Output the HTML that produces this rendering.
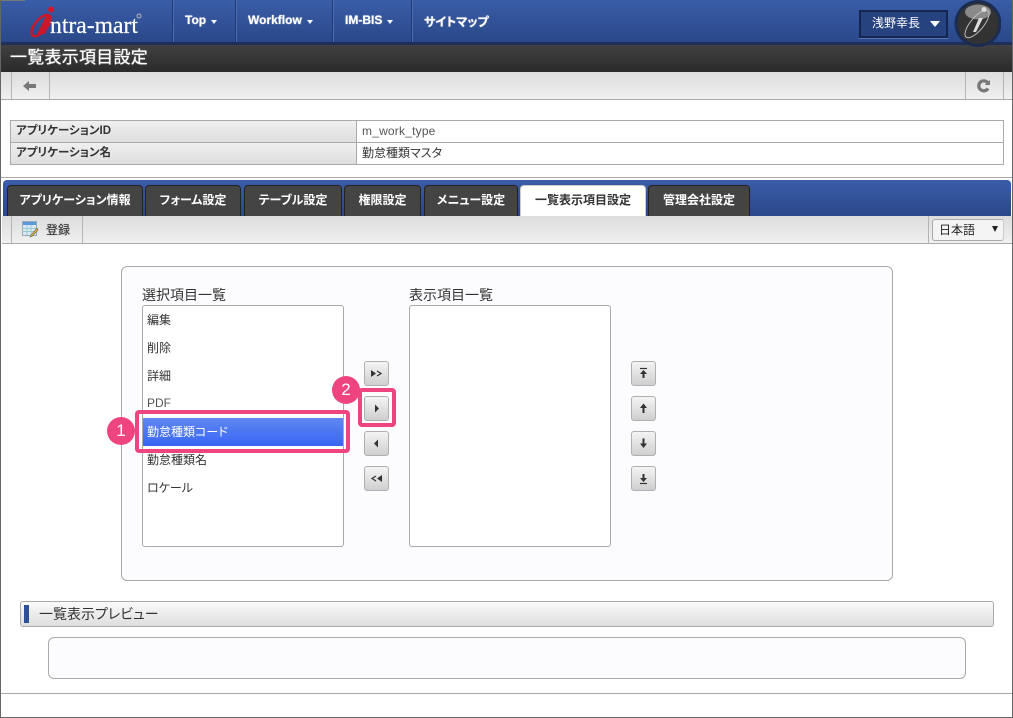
<!DOCTYPE html>
<html lang="ja"><head><meta charset="utf-8"><title>一覧表示項目設定</title>
<style>
html,body{margin:0;padding:0;background:#fff}
body{width:1013px;height:718px;position:relative;overflow:hidden;font-family:"Liberation Sans","Noto Sans CJK JP",sans-serif;font-size:12px;color:#333;font-feature-settings:"palt"}
.a{position:absolute;box-sizing:border-box}
.t{position:absolute;white-space:nowrap;line-height:16px}
.sep{position:absolute;width:1px;background:#b4b4b4}
.nav{position:absolute;top:0;height:42px;line-height:41px;color:#fff;font-weight:bold;font-size:12px;text-shadow:0 0 1px #fff;white-space:nowrap}
.nsep{position:absolute;top:0;height:42px;width:1px;background:#1f3a78;box-shadow:1px 0 0 #4a6cb0}
.caret{display:inline-block;width:0;height:0;border:3.500px solid transparent;border-top:4px solid #fff;border-bottom:0;margin-left:5px;vertical-align:0}
.tab{position:absolute;top:185px;height:31px;background:#444;border:1px solid #222;border-bottom:0;border-radius:4px 4px 0 0;color:#fff;font-weight:bold;text-align:center;line-height:28px;font-size:12px;box-sizing:border-box;white-space:nowrap}
.tab.on{background:#fff;color:#333;border-color:#ccc;font-weight:bold}
.list{position:absolute;top:305px;width:202px;height:242px;background:#fff;border:1px solid #aaa;border-radius:3px;box-sizing:border-box}
.it{position:absolute;left:147px;white-space:nowrap;font-size:12px;line-height:16px;color:#333}
.btn{position:absolute;width:25px;height:25px;box-sizing:border-box;border:1px solid #b0b0b0;border-radius:3px;background:linear-gradient(#f4f4f4,#cfcfcf)}
.btn svg{position:absolute;left:0;top:0}
.badge{position:absolute;width:28px;height:28px;border-radius:50%;background:#ee4581;color:#fff;text-align:center;line-height:28px;font-size:17px}
.pk{position:absolute;box-sizing:border-box;border:4px solid #ee4581;border-radius:4px}
</style></head><body>

<!-- header -->
<div class="a" style="left:0;top:0;width:1013px;height:42px;background:linear-gradient(#3a5da8,#2a4889)"></div>
<div class="a" style="left:0;top:42px;width:1013px;height:3px;background:#1f2f57"></div>
<div class="a" style="left:0;top:45px;width:1013px;height:27px;background:linear-gradient(#414141,#2a2a2a)"></div>
<div class="a" style="left:0;top:72px;width:1013px;height:27px;background:linear-gradient(#dcdcdc,#f0f0f0)"></div>
<div class="a" style="left:0;top:99px;width:1013px;height:1px;background:#aaa"></div>
<div class="a" style="left:0;top:0;width:25px;height:1px;background:#777"></div>

<!-- logo -->
<svg class="a" style="left:28px;top:4px" width="120" height="36" viewBox="0 0 120 36">
<ellipse cx="13" cy="21.500" rx="6" ry="13" transform="rotate(40 13 21.500)" fill="none" stroke="#c8182a" stroke-width="2.400"/>
<path d="M18 12 L24 12 L17 30 L9 30Z" fill="#c8182a"/>
<circle cx="23" cy="5.500" r="3" fill="#d4162a"/>
<text x="22" y="29" font-family="'Liberation Serif',serif" font-size="24" fill="#fff" stroke="#fff" stroke-width=".2" textLength="88" lengthAdjust="spacingAndGlyphs">ntra-mart</text>
<circle cx="111" cy="12" r="2" fill="none" stroke="#bbb" stroke-width="1"/>
</svg>

<div class="nsep" style="left:172px"></div>
<div class="nsep" style="left:235px"></div>
<div class="nsep" style="left:332px"></div>
<div class="nsep" style="left:411px"></div>
<div class="nav" style="left:185px">Top<span class="caret"></span></div>
<div class="nav" style="left:248px">Workflow<span class="caret"></span></div>
<div class="nav" style="left:345px">IM-BIS<span class="caret"></span></div>
<div class="nav" style="left:424px;top:2px;font-size:12px">サイトマップ</div>

<div class="a" style="left:859px;top:10px;width:89px;height:28px;background:#27437f;border:2px solid #142650;box-shadow:0 1px 0 #5575b5"></div>
<div class="t" style="left:872px;top:15px;color:#fff;font-size:12px">浅野幸長</div>
<div class="a" style="left:930px;top:21px;width:0;height:0;border:5px solid transparent;border-top:6px solid #fff;border-bottom:0"></div>

<svg class="a" style="left:953px;top:0" width="48" height="47" viewBox="0 0 48 47">
<circle cx="25" cy="23.500" r="23.500" fill="#1c2c50"/>
<circle cx="25" cy="23.500" r="20.500" fill="#333"/>
<ellipse cx="25" cy="12" rx="13" ry="7.500" fill="#8a8a8a"/>
<ellipse cx="24" cy="24" rx="6.500" ry="17" transform="rotate(40 24 24)" fill="none" stroke="#bbb" stroke-width="1"/>
<path d="M26 18 L20 32 L23 32 L30 18Z" fill="#ddd"/>
<circle cx="31" cy="9.500" r="2.500" fill="#ddd"/>
</svg>

<div class="t" style="left:10px;top:48px;color:#fff;font-size:17px;line-height:20px;letter-spacing:.25px;text-shadow:0 0 1px #fff;font-feature-settings:normal">一覧表示項目設定</div>

<!-- top toolbar -->
<div class="sep" style="left:11px;top:72px;height:27px"></div>
<div class="sep" style="left:49px;top:72px;height:27px"></div>
<div class="sep" style="left:965px;top:72px;height:27px"></div>
<div class="sep" style="left:1003px;top:72px;height:27px"></div>
<svg class="a" style="left:23px;top:80px" width="14" height="12" viewBox="0 0 14 12"><path d="M0 6 L6 1 V4 H13 V8 H6 V11Z" fill="#777"/></svg>
<svg class="a" style="left:977px;top:79px" width="14" height="14" viewBox="0 0 14 14"><path d="M11 9.500 A5 5 0 1 1 10.500 3.500" fill="none" stroke="#777" stroke-width="3.200"/><path d="M7.500 6 H13 V1Z" fill="#777"/></svg>

<!-- info table -->
<div class="a" style="left:10px;top:120px;width:994px;height:45px;border:1px solid #aaa;background:#fff"></div>
<div class="a" style="left:11px;top:121px;width:345px;height:43px;background:linear-gradient(#f0f0f0,#dedede 50%,#f0f0f0 50%,#dedede)"></div>
<div class="a" style="left:356px;top:120px;width:1px;height:45px;background:#aaa"></div>
<div class="a" style="left:10px;top:142px;width:994px;height:1px;background:#aaa"></div>
<div class="t" style="left:16px;top:123px;font-weight:bold;color:#333;font-size:11.500px">アプリケーションID</div>
<div class="t" style="left:16px;top:145px;font-weight:bold;color:#333;font-size:11.500px">アプリケーション名</div>
<div class="t" style="left:362px;top:123px;color:#555;letter-spacing:.2px">m_work_type</div>
<div class="t" style="left:362px;top:145px;color:#333">勤怠種類マスタ</div>

<!-- tabs -->
<div class="a" style="left:0;top:177px;width:1013px;height:1px;background:#aaa"></div>
<div class="a" style="left:3px;top:180px;width:1008px;height:36px;background:linear-gradient(#3a5da8,#2a4889);border-radius:4px 4px 0 0"></div>
<div class="tab" style="left:7px;width:136px">アプリケーション情報</div>
<div class="tab" style="left:145px;width:96px">フォーム設定</div>
<div class="tab" style="left:244px;width:98px">テーブル設定</div>
<div class="tab" style="left:344px;width:77px">権限設定</div>
<div class="tab" style="left:424px;width:94px">メニュー設定</div>
<div class="tab on" style="left:520px;width:126px">一覧表示項目設定</div>
<div class="tab" style="left:648px;width:102px">管理会社設定</div>

<!-- toolbar 2 -->
<div class="a" style="left:2px;top:216px;width:1010px;height:27px;background:linear-gradient(#dcdcdc,#f0f0f0)"></div>
<div class="a" style="left:2px;top:243px;width:1010px;height:1px;background:#aaa"></div>
<div class="sep" style="left:11px;top:216px;height:27px"></div>
<div class="sep" style="left:82px;top:216px;height:27px"></div>
<div class="sep" style="left:928px;top:216px;height:27px"></div>
<svg class="a" style="left:22px;top:221px" width="17" height="17" viewBox="0 0 17 17">
<rect x=".5" y=".5" width="14" height="14" fill="#dbe8f6" stroke="#9ab"/>
<rect x="1" y="1" width="13" height="3" fill="#5a9ad8"/>
<path d="M1 7.500H14M1 10.500H14M5 4V14M9 4V14" stroke="#9cc" stroke-width="1"/>
<path d="M15 7 L9 14 L8 16 L10 15.500 L16 9Z" fill="#e8b030" stroke="#665" stroke-width=".6"/>
</svg>
<div class="t" style="left:46px;top:222px;color:#333;text-shadow:0 0 1px #888">登録</div>
<div class="a" style="left:932px;top:219px;width:72px;height:22px;border:1px solid #aaa;border-right-color:#ccc;border-radius:3px;background:#f4f4f4"></div>
<div class="t" style="left:939px;top:222px;color:#222">日本語</div>
<div class="a" style="left:992px;top:226px;width:0;height:0;border:3.500px solid transparent;border-top:6px solid #222;border-bottom:0"></div>

<!-- main panel -->
<div class="a" style="left:121px;top:266px;width:772px;height:315px;background:#fcfcff;border:1px solid #aaa;border-radius:6px"></div>
<div class="t" style="left:142px;top:287px;font-size:14px;color:#333">選択項目一覧</div>
<div class="t" style="left:409px;top:287px;font-size:14px;color:#333">表示項目一覧</div>
<div class="list" style="left:142px"></div>
<div class="list" style="left:409px"></div>
<div class="a" style="left:143px;top:418px;width:200px;height:28px;background:linear-gradient(#6087f2,#3766f3)"></div>
<div class="it" style="top:312px">編集</div>
<div class="it" style="top:340px">削除</div>
<div class="it" style="top:368px">詳細</div>
<div class="it" style="top:395px;color:#555">PDF</div>
<div class="it" style="top:424px;color:#fff">勤怠種類コード</div>
<div class="it" style="top:452px">勤怠種類名</div>
<div class="it" style="top:480px">ロケール</div>

<!-- move buttons -->
<div class="btn" style="left:364px;top:361px"><svg width="23" height="23" viewBox="0 0 23 23"><path d="M6 8 L11 11.500 L6 15Z" fill="#333"/><path d="M12 9 L16 11.500 L12 14" fill="none" stroke="#333" stroke-width="1.200"/></svg></div>
<div class="btn" style="left:364px;top:396px"><svg width="23" height="23" viewBox="0 0 23 23"><path d="M10 7.500 L14 11.500 L10 15.500Z" fill="#333"/></svg></div>
<div class="btn" style="left:364px;top:431px"><svg width="23" height="23" viewBox="0 0 23 23"><path d="M13 7.500 L9 11.500 L13 15.500Z" fill="#333"/></svg></div>
<div class="btn" style="left:364px;top:466px"><svg width="23" height="23" viewBox="0 0 23 23"><path d="M17 8 L12 11.500 L17 15Z" fill="#333"/><path d="M11 9 L7 11.500 L11 14" fill="none" stroke="#333" stroke-width="1.200"/></svg></div>
<div class="btn" style="left:631px;top:361px"><svg width="23" height="23" viewBox="0 0 23 23"><path d="M8 6.500H15" stroke="#333" stroke-width="1.200"/><path d="M11.500 8 L15 12 H12.500 V16 H10.500 V12 H8Z" fill="#333"/></svg></div>
<div class="btn" style="left:631px;top:396px"><svg width="23" height="23" viewBox="0 0 23 23"><path d="M11.500 6.500 L15 11 H12.500 V16 H10.500 V11 H8Z" fill="#333"/></svg></div>
<div class="btn" style="left:631px;top:431px"><svg width="23" height="23" viewBox="0 0 23 23"><path d="M11.500 16 L15 11.500 H12.500 V6.500 H10.500 V11.500 H8Z" fill="#333"/></svg></div>
<div class="btn" style="left:631px;top:466px"><svg width="23" height="23" viewBox="0 0 23 23"><path d="M8 16.500H15" stroke="#333" stroke-width="1.200"/><path d="M11.500 15 L15 11 H12.500 V7 H10.500 V11 H8Z" fill="#333"/></svg></div>

<!-- annotations -->
<div class="pk" style="left:135px;top:410px;width:215px;height:43px"></div>
<div class="pk" style="left:358px;top:388px;width:38px;height:39px"></div>
<div class="badge" style="left:107px;top:417px">1</div>
<div class="badge" style="left:332px;top:376px">2</div>

<!-- preview -->
<div class="a" style="left:20px;top:601px;width:974px;height:26px;border:1px solid #aaa;border-radius:3px;background:linear-gradient(#fafafa,#dedede)"></div>
<div class="a" style="left:24px;top:605px;width:5px;height:18px;background:#2f5097"></div>
<div class="t" style="left:39px;top:606px;font-size:14px;color:#333">一覧表示プレビュー</div>
<div class="a" style="left:48px;top:637px;width:918px;height:42px;background:#fcfcff;border:1px solid #aaa;border-radius:6px"></div>
<div class="a" style="left:1px;top:693px;width:1011px;height:1px;background:#aaa"></div>

<!-- outer frame -->
<div class="a" style="left:0;top:0;width:1px;height:718px;background:#666"></div>
<div class="a" style="left:1012px;top:0;width:1px;height:718px;background:#666"></div>
<div class="a" style="left:0;top:717px;width:1013px;height:1px;background:#666"></div>
</body></html>
